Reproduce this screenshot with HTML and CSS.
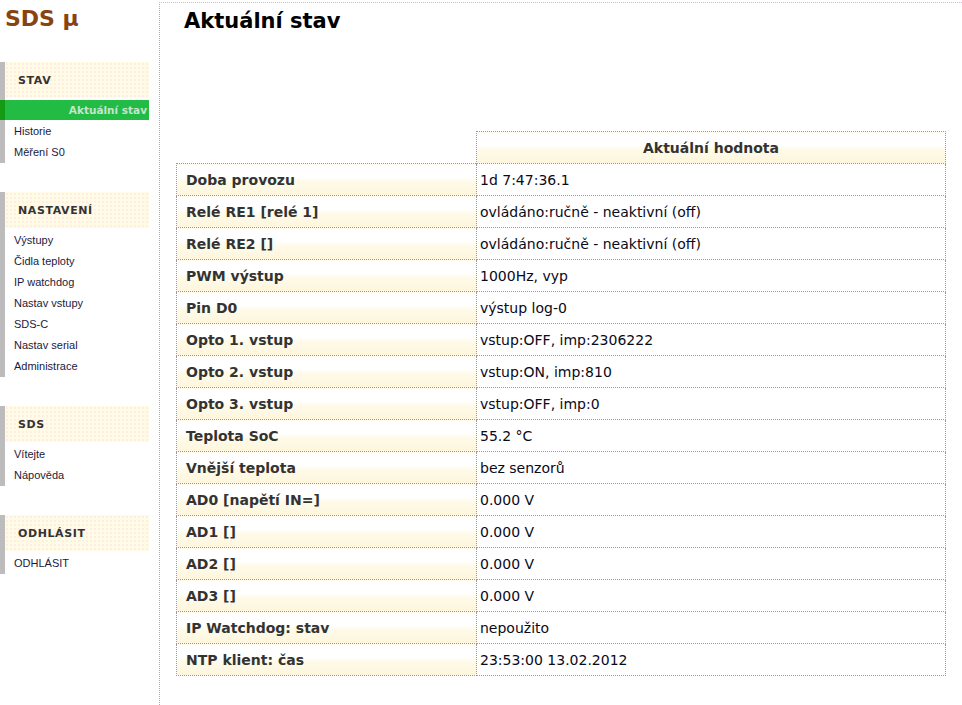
FILE: index.html
```html
<!DOCTYPE html>
<html lang="cs">
<head>
<meta charset="utf-8">
<title>SDS μ - Aktuální stav</title>
<link rel="stylesheet" href="styles.css">
</head>
<body>
<div class="page">
  <aside class="sidebar">
    <div class="logo">SDS μ</div>
    <section class="menu">
      <h2 class="menu-head">STAV</h2>
      <ul class="menu-list">
        <li class="active">Aktuální stav</li>
        <li>Historie</li>
        <li>Měření S0</li>
      </ul>
    </section>
    <section class="menu">
      <h2 class="menu-head">NASTAVENÍ</h2>
      <ul class="menu-list">
        <li>Výstupy</li>
        <li>Čidla teploty</li>
        <li>IP watchdog</li>
        <li>Nastav vstupy</li>
        <li>SDS-C</li>
        <li>Nastav serial</li>
        <li>Administrace</li>
      </ul>
    </section>
    <section class="menu">
      <h2 class="menu-head">SDS</h2>
      <ul class="menu-list">
        <li>Vítejte</li>
        <li>Nápověda</li>
      </ul>
    </section>
    <section class="menu">
      <h2 class="menu-head">ODHLÁSIT</h2>
      <ul class="menu-list">
        <li>ODHLÁSIT</li>
      </ul>
    </section>
  </aside>
  <main class="main">
    <h1 class="title">Aktuální stav</h1>
    <table class="state">
      <thead>
        <tr><th class="blank"></th><th class="head">Aktuální hodnota</th></tr>
      </thead>
      <tbody>
        <tr><th>Doba provozu</th><td>1d 7:47:36.1</td></tr>
        <tr><th>Relé RE1 [relé 1]</th><td>ovládáno:ručně - neaktivní (off)</td></tr>
        <tr><th>Relé RE2 []</th><td>ovládáno:ručně - neaktivní (off)</td></tr>
        <tr><th>PWM výstup</th><td>1000Hz, vyp</td></tr>
        <tr><th>Pin D0</th><td>výstup log-0</td></tr>
        <tr><th>Opto 1. vstup</th><td>vstup:OFF, imp:2306222</td></tr>
        <tr><th>Opto 2. vstup</th><td>vstup:ON, imp:810</td></tr>
        <tr><th>Opto 3. vstup</th><td>vstup:OFF, imp:0</td></tr>
        <tr><th>Teplota SoC</th><td>55.2 °C</td></tr>
        <tr><th>Vnější teplota</th><td>bez senzorů</td></tr>
        <tr><th>AD0 [napětí IN=]</th><td>0.000 V</td></tr>
        <tr><th>AD1 []</th><td>0.000 V</td></tr>
        <tr><th>AD2 []</th><td>0.000 V</td></tr>
        <tr><th>AD3 []</th><td>0.000 V</td></tr>
        <tr><th>IP Watchdog: stav</th><td>nepoužito</td></tr>
        <tr><th>NTP klient: čas</th><td>23:53:00 13.02.2012</td></tr>
      </tbody>
    </table>
  </main>
</div>
</body>
</html>
```

FILE: styles.css
```css
html, body {
  margin: 0;
  padding: 0;
  background: #fff;
}
body {
  font-family: "DejaVu Sans", Verdana, sans-serif;
  color: #000;
}
.page {
  display: flex;
  min-height: 705px;
}
.sidebar {
  width: 159px;
  flex: none;
}
.logo {
  height: 62px;
  box-sizing: border-box;
  padding: 6px 0 0 5px;
  font-family: "DejaVu Sans", Verdana, sans-serif;
  font-weight: bold;
  font-size: 22px;
  line-height: 26px;
  color: #874310;
}
.menu {
  border-left: 5px solid #bcbcbc;
  margin-bottom: 29px;
  width: 144px;
}
.menu-head {
  margin: 0;
  height: 36px;
  box-sizing: border-box;
  padding: 12px 0 0 13px;
  font-size: 11px;
  line-height: 14px;
  font-weight: bold;
  letter-spacing: 0.6px;
  color: #333;
  background-color: #fffbe4;
  background-image: radial-gradient(#fbdde6 0.6px, transparent 0.8px);
  background-size: 4px 4px;
}
.menu-list {
  list-style: none;
  margin: 0;
  padding: 2px 0 0 0;
}
.menu-list li {
  height: 21px;
  line-height: 21px;
  padding-left: 9px;
  font-family: "Liberation Sans", Tahoma, sans-serif;
  font-size: 11px;
  color: #1a1a40;
}
.menu-list li.active {
  margin-left: -5px;
  border-left: 5px solid #149a14;
  height: 20px;
  line-height: 20px;
  margin-bottom: 1px;
  padding: 0 2px 0 0;
  text-align: right;
  background: #22bb44;
  font-family: "DejaVu Sans", Verdana, sans-serif;
  font-weight: bold;
  font-size: 10.5px;
  color: #c6e4cf;
}
.main {
  flex: 1;
  margin-top: 2px;
  border-left: 1px dotted #b9a4c0;
  border-top: 1px dotted #d2b4d2;
  padding-left: 16px;
}
.title {
  margin: 4px 0 0 8px;
  font-size: 21px;
  line-height: 28px;
  font-weight: bold;
  color: #000;
}
.state {
  margin-top: 96px;
  border-collapse: collapse;
  width: 770px;
  font-size: 14px;
}
.state th, .state td {
  height: 31px;
  padding: 0;
  border: 1px dotted #9a9a9a;
  text-align: left;
  vertical-align: middle;
}
.state tbody th {
  width: 290px;
  padding-left: 9px;
  font-weight: bold;
  color: #333;
  background: linear-gradient(to bottom, #fff 0%, #fff 42%, #fffbea 52%, #fdf5dc 100%);
}
.state td {
  padding-left: 3px;
  color: #0a0a1a;
  background: #fff;
}
.state th.blank {
  border: none;
  background: none;
}
.state th.head {
  text-align: center;
  font-weight: bold;
  color: #333;
  background: linear-gradient(to bottom, #fff 0%, #fff 42%, #fffbea 52%, #fdf5dc 100%);
}
```
